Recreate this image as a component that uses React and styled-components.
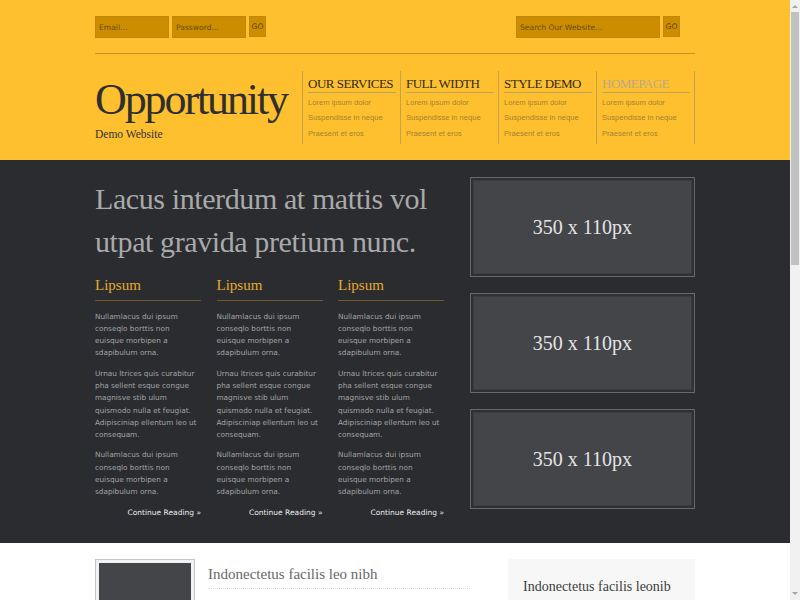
import styled, { createGlobalStyle } from "styled-components";

const GlobalStyle = createGlobalStyle`
  * { box-sizing: border-box; }
  html {
    overflow: hidden;
  }
  body {
    margin: 0;
    padding-right: 10px;
    background: #ffffff;
    font-family: "DejaVu Sans", Verdana, sans-serif;
  }
`;

const navMenus = [
  { title: "Our Services" },
  { title: "Full Width" },
  { title: "Style Demo" },
  { title: "Homepage", active: true },
];
const navLinks = ["Lorem ipsum dolor", "Suspendisse in neque", "Praesent et eros"];

const para1 = "Nullamlacus dui ipsum conseqlo borttis non euisque morbipen a sdapibulum orna.";
const para2 =
  "Urnau ltrices quis curabitur pha sellent esque congue magnisve stib ulum quismodo nulla et feugiat. Adipisciniap ellentum leo ut consequam.";

export default function App() {
  return (
    <>
      <GlobalStyle />
      <Header>
        <Wrap>
          <TopBar>
            <Form>
              <Field placeholder="Email..." />
              <Field placeholder="Password..." />
              <GoButton>GO</GoButton>
            </Form>
            <Form $right>
              <Field $wide placeholder="Search Our Website..." />
              <GoButton>GO</GoButton>
            </Form>
          </TopBar>
          <Masthead>
            <Brand>
              <BrandName>Opportunity</BrandName>
              <Tagline>Demo Website</Tagline>
            </Brand>
            <Nav>
              {navMenus.map((m) => (
                <NavCol key={m.title}>
                  <NavTitle $active={m.active}>{m.title}</NavTitle>
                  <NavList>
                    {navLinks.map((l) => (
                      <NavItem key={l}>{l}</NavItem>
                    ))}
                  </NavList>
                </NavCol>
              ))}
            </Nav>
          </Masthead>
        </Wrap>
      </Header>

      <Feature>
        <Wrap $split>
          <Intro>
            <Headline>Lacus interdum at mattis vol utpat gravida pretium nunc.</Headline>
            <Columns>
              {[1, 2, 3].map((n) => (
                <Column key={n}>
                  <ColTitle>Lipsum</ColTitle>
                  <ColText>{para1}</ColText>
                  <ColText>{para2}</ColText>
                  <ColText>{para1}</ColText>
                  <More href="#">Continue Reading &raquo;</More>
                </Column>
              ))}
            </Columns>
          </Intro>
          <Ads>
            {[1, 2, 3].map((n) => (
              <AdBox key={n}>
                <AdInner>350 x 110px</AdInner>
              </AdBox>
            ))}
          </Ads>
        </Wrap>
      </Feature>

      <Content>
        <Wrap $split>
          <Posts>
            {[1, 2].map((n) => (
              <Post key={n}>
                <Thumb>
                  <ThumbInner />
                </Thumb>
                <PostBody>
                  <PostTitle>Indonectetus facilis leo nibh</PostTitle>
                  <Excerpt>
                    Nullamlacus dui ipsum conseqlo borttis non euisque morbipen a sdapibulum orna.
                    Urnau ltrices quis curabitur pha sellent esque congue magnisve stib ulum
                    quismodo nulla et feugiat.
                  </Excerpt>
                </PostBody>
              </Post>
            ))}
          </Posts>
          <Sidebar>
            <SideTitle>Indonectetus facilis leonib</SideTitle>
            <Excerpt>
              Nullamlacus dui ipsum conseqlo borttis non euisque morbipen a sdapibulum orna.
            </Excerpt>
          </Sidebar>
        </Wrap>
      </Content>

      <Scrollbar>
        <Arrow />
        <Thumb2 />
        <Arrow $down />
      </Scrollbar>
    </>
  );
}

const Wrap = styled.div`
  width: 600px;
  margin: 0 auto;
  ${(p) => p.$split && "display: flex; justify-content: space-between; align-items: flex-start;"}
`;

const Header = styled.header`
  background: #fec02f;
  padding: 16px 0 16px;
`;

const TopBar = styled.div`
  display: flex;
  justify-content: space-between;
  padding-bottom: 15px;
  border-bottom: 1px solid #c9961f;
`;

const Form = styled.div`
  display: flex;
  gap: 3px;
  align-items: flex-start;
  margin-right: ${(p) => (p.$right ? "15px" : "0")};
`;

const Field = styled.input`
  width: ${(p) => (p.$wide ? "144px" : "74px")};
  height: 22px;
  padding: 0 3px;
  margin: 0;
  background: #cc8e00;
  border: 1px solid #c0870a;
  font-family: "DejaVu Sans", Verdana, sans-serif;
  font-size: 7.6px;
  color: #5e4500;
  outline: none;
  &::placeholder {
    color: #654a00;
  }
`;

const GoButton = styled.button`
  width: 17px;
  height: 21px;
  padding: 0;
  margin: 0;
  background: #cc8e00;
  border: 1px solid #c0870a;
  font-family: "DejaVu Sans", Verdana, sans-serif;
  font-size: 7.6px;
  color: #5a4300;
`;

const Masthead = styled.div`
  display: flex;
  justify-content: space-between;
  margin-top: 17px;
`;

const Brand = styled.div`
  padding-top: 7px;
`;

const BrandName = styled.h1`
  margin: 0;
  font-family: "Liberation Serif", "Times New Roman", serif;
  font-weight: normal;
  font-size: 44px;
  line-height: 44px;
  letter-spacing: -2.1px;
  color: #2f2f30;
`;

const Tagline = styled.div`
  margin-top: 6px;
  font-family: "Liberation Serif", "Times New Roman", serif;
  font-size: 11.5px;
  color: #333;
`;

const Nav = styled.nav`
  display: flex;
  border-right: 1px solid #c7a04a;
  height: 73px;
`;

const NavCol = styled.div`
  width: 98px;
  padding: 6px 5px 0;
  border-left: 1px solid #c7a04a;
`;

const NavTitle = styled.div`
  width: 88px;
  padding-bottom: 1px;
  border-bottom: 1px solid #c2a35c;
  font-family: "Liberation Serif", "Times New Roman", serif;
  font-size: 13px;
  line-height: 14px;
  letter-spacing: -0.5px;
  text-transform: uppercase;
  white-space: nowrap;
  color: ${(p) => (p.$active ? "#bba88b" : "#2e2a20")};
`;

const NavList = styled.ul`
  list-style: none;
  margin: 1.5px 0 0;
  padding: 0;
`;

const NavItem = styled.li`
  font-family: "Liberation Sans", Arial, sans-serif;
  font-size: 7.6px;
  line-height: 15.5px;
  color: #a5822e;
  white-space: nowrap;
`;

const Feature = styled.section`
  background: #2b2c30;
  padding: 17px 0 24px;
`;

const Intro = styled.div`
  width: 350px;
`;

const Headline = styled.h2`
  margin: 0;
  font-family: "Liberation Serif", "Times New Roman", serif;
  font-weight: normal;
  font-size: 30px;
  line-height: 43px;
  letter-spacing: -0.4px;
  color: #a9a9a9;
`;

const Columns = styled.div`
  display: grid;
  grid-template-columns: repeat(3, 106px);
  column-gap: 15.5px;
  margin-top: 13px;
`;

const Column = styled.div`
  display: flex;
  flex-direction: column;
`;

const ColTitle = styled.h3`
  margin: 0 0 9.5px;
  padding-bottom: 6px;
  border-bottom: 1px solid #6e5a2a;
  font-family: "Liberation Serif", "Times New Roman", serif;
  font-weight: normal;
  font-size: 15px;
  line-height: 18px;
  color: #e7aa2b;
`;

const ColText = styled.p`
  width: 104px;
  margin: 0 0 8px;
  font-size: 7.3px;
  line-height: 12.3px;
  color: #a2a2a2;
`;

const More = styled.a`
  align-self: flex-end;
  font-size: 7.5px;
  line-height: 12.3px;
  color: #ececec;
  text-decoration: none;
`;

const Ads = styled.div`
  width: 225px;
  display: flex;
  flex-direction: column;
  gap: 16px;
`;

const AdBox = styled.div`
  height: 100px;
  padding: 2px;
  background: #2f3034;
  border: 1px solid #68686b;
  display: flex;
`;

const AdInner = styled.div`
  flex: 1;
  display: flex;
  align-items: center;
  justify-content: center;
  background: #444549;
  border: 1px solid #3b3c40;
  font-family: "Liberation Serif", "Times New Roman", serif;
  font-size: 20px;
  color: #e4e4e4;
`;

const Content = styled.section`
  padding: 16px 0 40px;
`;

const Posts = styled.div`
  width: 375px;
  display: flex;
  flex-direction: column;
  gap: 24px;
`;

const Post = styled.article`
  display: flex;
  gap: 13px;
`;

const Thumb = styled.div`
  width: 100px;
  height: 100px;
  flex-shrink: 0;
  padding: 3px;
  background: #f2f2f2;
  border: 1px solid #c6c6c6;
  display: flex;
`;

const ThumbInner = styled.div`
  flex: 1;
  background: #444549;
`;

const PostBody = styled.div`
  width: 262px;
`;

const PostTitle = styled.h3`
  margin: 5px 0 0;
  padding-bottom: 4px;
  border-bottom: 1px dotted #dadada;
  font-family: "Liberation Serif", "Times New Roman", serif;
  font-weight: normal;
  font-size: 15px;
  line-height: 20px;
  color: #686868;
`;

const Excerpt = styled.p`
  margin: 10px 0 0;
  font-size: 7.5px;
  line-height: 12.3px;
  color: #777;
`;

const Sidebar = styled.aside`
  width: 187px;
  padding: 18px 15px 20px;
  background: #f7f7f7;
`;

const SideTitle = styled.h3`
  margin: 0;
  font-family: "Liberation Serif", "Times New Roman", serif;
  font-weight: normal;
  font-size: 14px;
  line-height: 20px;
  white-space: nowrap;
  color: #3c3c3c;
`;

const Scrollbar = styled.div`
  position: fixed;
  top: 0;
  right: 0;
  width: 10px;
  height: 100vh;
  display: flex;
  flex-direction: column;
  align-items: center;
  background: #f1f1f1;
`;

const Arrow = styled.div`
  width: 0;
  height: 0;
  margin: ${(p) => (p.$down ? "auto 0 5px" : "5px 0 4px")};
  border-left: 3px solid transparent;
  border-right: 3px solid transparent;
  ${(p) => (p.$down ? "border-top: 3px solid #a3a3a3;" : "border-bottom: 3px solid #a3a3a3;")}
`;

const Thumb2 = styled.div`
  width: 8px;
  height: 253px;
  background: #c1c1c1;
`;
